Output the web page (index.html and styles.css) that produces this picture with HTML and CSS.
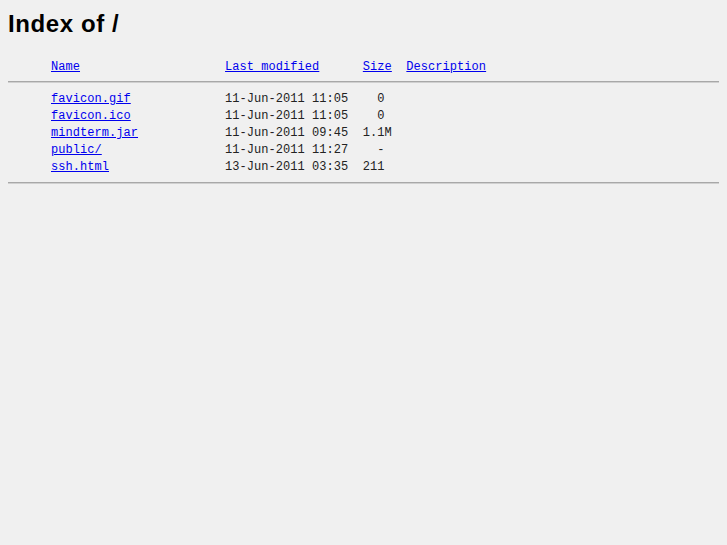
FILE: index.html
```html
<!DOCTYPE html>
<html>
<head>
<title>Index of /</title>
<link rel="stylesheet" href="styles.css">
</head>
<body>
<h1 class="title">Index of /</h1>
<pre class="listing"><span class="icon"></span><a href="?C=N;O=D">Name</a>                    <a href="?C=M;O=A">Last modified</a>      <a href="?C=S;O=A">Size</a>  <a href="?C=D;O=A">Description</a><hr class="rule"><span class="icon"></span><a href="favicon.gif">favicon.gif</a>             11-Jun-2011 11:05    0   
<span class="icon"></span><a href="favicon.ico">favicon.ico</a>             11-Jun-2011 11:05    0   
<span class="icon"></span><a href="mindterm.jar">mindterm.jar</a>            11-Jun-2011 09:45  1.1M  
<span class="icon"></span><a href="public/">public/</a>                 11-Jun-2011 11:27    -   
<span class="icon"></span><a href="ssh.html">ssh.html</a>                13-Jun-2011 03:35  211   
<hr class="rule rule-end"></pre>
</body>
</html>
```
FILE: styles.css
```css
html {
  background: #f0f0f0;
}
body {
  margin: 8px;
  background: #f0f0f0;
  color: #000;
}
.title {
  font-family: "Liberation Sans", Arial, sans-serif;
  font-size: 24px;
  font-weight: bold;
  letter-spacing: 0.6px;
  margin: 2px 0 0 0;
  line-height: 28px;
}
.listing {
  font-family: "Liberation Mono", "Courier New", monospace;
  font-size: 12px;
  letter-spacing: 0.05px;
  line-height: 17px;
  margin: 21px 0 0 0;
  color: #222;
}
.listing a {
  color: #0000ee;
}
.icon {
  display: inline-block;
  width: 43px;
}
.rule {
  border: 0;
  border-top: 1px solid #a8a8a8;
  border-bottom: 1px solid #d0d0d0;
  height: 0;
  margin: 5px 0 8px 0;
}
.rule-end {
  margin-top: 6px;
}
```
